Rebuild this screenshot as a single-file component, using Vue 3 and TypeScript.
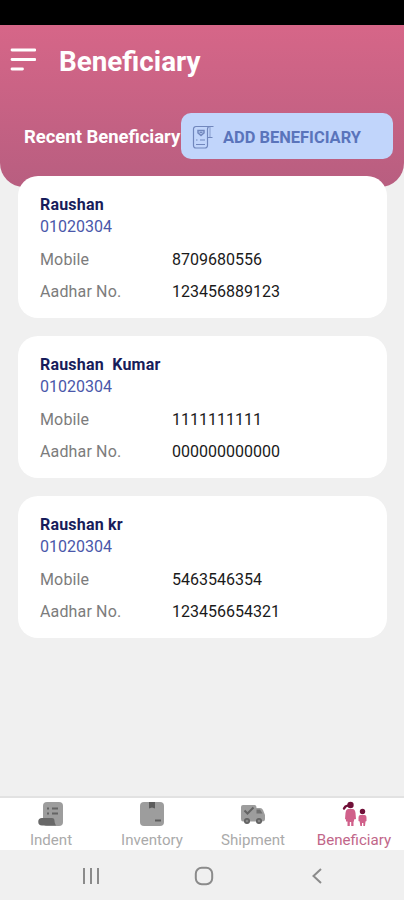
<script setup lang="ts">
interface Beneficiary {
  name: string
  code: string
  mobile: string
  aadhar: string
}

const beneficiaries: Beneficiary[] = [
  { name: 'Raushan', code: '01020304', mobile: '8709680556', aadhar: '123456889123' },
  { name: 'Raushan  Kumar', code: '01020304', mobile: '1111111111', aadhar: '000000000000' },
  { name: 'Raushan kr', code: '01020304', mobile: '5463546354', aadhar: '123456654321' },
]
</script>

<template>
  <div class="screen">
    <div class="status"></div>
    <header class="header">
      <div class="title-row">
        <svg class="menu" width="26" height="24" viewBox="0 0 26 24">
          <path d="M2 2H25M2 11.5H25M2 21H12.500" stroke="#fff" stroke-width="2.8" stroke-linecap="round" />
        </svg>
        <h1 class="title">Beneficiary</h1>
      </div>
      <div class="sub-row">
        <h2 class="subtitle">Recent Beneficiary</h2>
        <button class="add" type="button">
          <svg width="23" height="24" viewBox="0 0 23 24" fill="none" stroke="#7187bd" stroke-width="1.2">
            <path d="M18 1.500H4A2.500 2.500 0 0 0 1.500 4V20.500A2.500 2.500 0 0 0 4 23H13A2.500 2.500 0 0 0 15.500 20.500V4Q15.500 1.500 18 1.500H21.500M15.500 12.500H20.500" />
            <path d="M18 2V12.500" stroke-opacity=".6" />
            <path d="M6 5.500H12V8L9 10.500L6 8ZM7.500 7.500H10.500" stroke-width="1.500" />
            <path d="M4 15H5.500M8 15H13M4 19.500H13" />
          </svg>
          <span class="add-label">ADD BENEFICIARY</span>
        </button>
      </div>
    </header>

    <main class="list">
      <article v-for="(b, i) in beneficiaries" :key="i" class="card">
        <div class="name">{{ b.name }}</div>
        <div class="code">{{ b.code }}</div>
        <dl class="facts">
          <dt>Mobile</dt>
          <dd>{{ b.mobile }}</dd>
          <dt>Aadhar No.</dt>
          <dd>{{ b.aadhar }}</dd>
        </dl>
      </article>
    </main>

    <nav class="tabs">
      <a class="tab">
        <svg width="26" height="26" viewBox="0 0 26 26">
          <rect x="5" y="1" width="20" height="24" rx="4" fill="#9d9d9d" />
          <path d="M9 7.500H11M14 7.500H20M9 12.500H11M14 12.500H20" stroke="#646464" stroke-width="2" />
          <path d="M4 17H14Q16.500 17 16.500 20Q16.500 22.500 18 24.500H4A3.750 3.750 0 0 1 4 17Z" fill="#686868" />
        </svg>
        <span class="tab-label">Indent</span>
      </a>
      <a class="tab">
        <svg width="26" height="26" viewBox="0 0 26 26">
          <rect x="1" y="1" width="24" height="24" rx="4" fill="#9d9d9d" />
          <path d="M10 1H16V7.500L13 6.500L10 7.500Z" fill="#5c5c5c" />
          <path d="M16 19.500H22" stroke="#5c5c5c" stroke-width="2" />
        </svg>
        <span class="tab-label">Inventory</span>
      </a>
      <a class="tab">
        <svg width="26" height="26" viewBox="0 0 26 26">
          <path d="M3 4H14.500Q16.500 4 16.500 7H20Q22 7 23 9L25 14V18Q25 20.500 22 20.500H3Q1 20.500 1 18V6Q1 4 3 4Z" fill="#9d9d9d" />
          <path d="M16.500 8.500H20L22.500 12.500H16.500Z" fill="#707070" />
          <path d="M4.500 9.500L7.500 12.500L13.500 6.500" fill="none" stroke="#646464" stroke-width="2" />
          <circle cx="7" cy="20" r="2.200" fill="#888" stroke="#626262" stroke-width="1.700" />
          <circle cx="19" cy="20" r="2.200" fill="#888" stroke="#626262" stroke-width="1.700" />
        </svg>
        <span class="tab-label">Shipment</span>
      </a>
      <a class="tab active">
        <svg width="26" height="26" viewBox="0 0 26 26">
          <path d="M3 7.500L4.500 5.500L7 4.500" fill="none" stroke="#701038" stroke-width="2.400" stroke-linecap="round" />
          <circle cx="9.500" cy="4" r="3.200" fill="#701038" />
          <path d="M7.500 8H11.500Q14 8 14.500 12L15 18L13 18.500V20.500H12.500V25H10.200V21H8.800V25H6.500V20.500H5V18.500L4 18L4.500 12Q5 8 7.500 8Z" fill="#d0608a" />
          <circle cx="21.500" cy="10.500" r="2.700" fill="#701038" />
          <path d="M19.500 14H23.500Q25.500 14 25.500 17V20L24.500 20.500L24 25H22.300V22H21V25H19.300L18.700 20.500L17.500 20V17Q17.500 14 19.500 14Z" fill="#d0608a" />
        </svg>
        <span class="tab-label">Beneficiary</span>
      </a>
    </nav>

    <div class="system">
      <svg width="18" height="18" viewBox="0 0 18 18"><path d="M2 1V17M9 1V17M16 1V17" stroke="#8b8b8b" stroke-width="2" /></svg>
      <svg class="home" width="20" height="20" viewBox="0 0 20 20"><rect x="1.800" y="1.800" width="16.400" height="16.400" rx="6" fill="none" stroke="#8b8b8b" stroke-width="2" /></svg>
      <svg width="12" height="18" viewBox="0 0 12 18"><path d="M10 2L2.500 9L10 16" fill="none" stroke="#8b8b8b" stroke-width="2" /></svg>
    </div>
  </div>
</template>

<style>
body {
  background: #f0f0f0;
}
</style>

<style scoped>
.screen {
  display: flex;
  flex-direction: column;
  width: 404px;
  height: 900px;
  overflow: hidden;
  background: #f0f0f0;
  font-family: Roboto, sans-serif;
}
.status {
  height: 25px;
  background: #000;
  flex: none;
}
.header {
  flex: none;
  box-sizing: border-box;
  height: 162px;
  background: linear-gradient(#d66688, #b85e80);
  border-radius: 0 0 24px 24px;
}
.title-row {
  display: flex;
  align-items: center;
  height: 73px;
  padding-left: 10px;
}
.menu {
  margin: 0 23px 4px 0;
}
.title {
  margin: 0;
  font-size: 27.800px;
  line-height: 32px;
  font-weight: 700;
  color: #fff;
}
.sub-row {
  display: flex;
  align-items: center;
  justify-content: space-between;
  margin-top: 15px;
  height: 46px;
  padding: 0 11px 0 24px;
}
.subtitle {
  margin: 2px 0 0;
  font-size: 18.450px;
  font-weight: 700;
  color: #fff;
  white-space: nowrap;
}
.add {
  flex: none;
  display: flex;
  align-items: center;
  box-sizing: border-box;
  width: 212px;
  height: 46px;
  padding: 2px 0 0 11px;
  border: 0;
  border-radius: 10px;
  background: #c1d5fb;
  font-family: inherit;
}
.add-label {
  margin-left: 8px;
  font-size: 16.450px;
  font-weight: 700;
  color: #5a74bb;
  white-space: nowrap;
}
.list {
  flex: 1;
  display: flex;
  flex-direction: column;
  gap: 18px;
  margin-top: -10.600px;
  padding: 0 17px 0 18px;
}
.card {
  box-sizing: border-box;
  height: 142px;
  padding: 17.600px 22px 0;
  border-radius: 20px;
  background: #fff;
  font-size: 16px;
  line-height: 22px;
}
.name {
  font-weight: 700;
  letter-spacing: 0.2px;
  color: #171c5b;
  white-space: pre;
}
.code {
  color: #4a57aa;
}
.facts {
  display: grid;
  grid-template-columns: 132px 1fr;
  row-gap: 10px;
  margin: 11px 0 0;
}
.facts dt {
  letter-spacing: 0.15px;
  color: #7c7c7c;
}
.facts dd {
  margin: 0;
  color: #1a1a1a;
}
.tabs {
  flex: none;
  display: grid;
  grid-template-columns: repeat(4, 1fr);
  box-sizing: border-box;
  height: 54px;
  border-top: 2px solid #e2e2e2;
  background: #fff;
}
.tab {
  display: flex;
  flex-direction: column;
  align-items: center;
  padding: 3px 0 0 1px;
  color: #aaa;
}
.tab-label {
  margin-top: 4px;
  font-size: 15.100px;
  line-height: 18px;
}
.active {
  color: #c16689;
}
.system {
  flex: none;
  display: flex;
  align-items: center;
  justify-content: space-between;
  box-sizing: border-box;
  height: 50px;
  padding: 2px 81px 0 82px;
  background: #f0f0f0;
}
.home {
  margin-right: 4px;
}
</style>
